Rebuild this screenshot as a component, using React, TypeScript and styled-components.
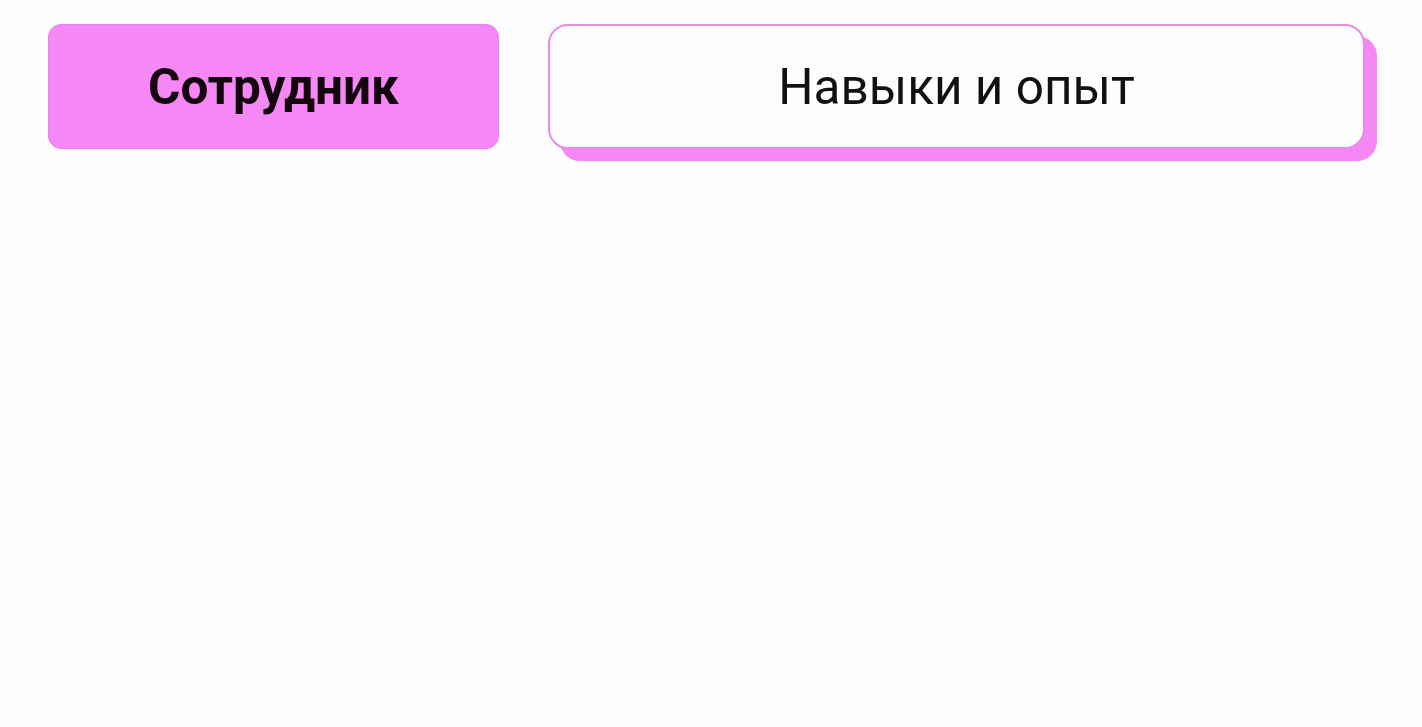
import React from 'react'
import styled, { createGlobalStyle } from 'styled-components'

const GlobalStyle = createGlobalStyle`
  html, body {
    margin: 0;
    padding: 0;
    background: #fdfdfe;
    font-family: Roboto, 'Noto Sans', sans-serif;
  }
`

const Page = styled.div`
  display: flex;
  flex-direction: row;
  align-items: flex-start;
  gap: 49px;
  padding: 24px 57px 0 48px;
  min-height: 727px;
  box-sizing: border-box;
`

const TabButton = styled.button<{ $active?: boolean }>`
  display: flex;
  align-items: center;
  justify-content: center;
  height: 125px;
  box-sizing: border-box;
  font-family: Roboto, 'Noto Sans', sans-serif;
  font-size: 49.5px;
  color: #111;
  cursor: pointer;
  ${(p) =>
    p.$active
      ? `
    width: 451px;
    flex-shrink: 0;
    background: #f588f5;
    border: 1px solid #ec80ec;
    border-radius: 13px;
    font-weight: 700;
    color: #14060f;
  `
      : `
    flex: 1;
    background: #fcfdfe;
    border: 2px solid #e98be8;
    border-radius: 20px;
    font-weight: 400;
    box-shadow: 12px 12px 0 0 #f588f5;
  `}
`

export default function App() {
  return (
    <>
      <GlobalStyle />
      <Page>
        <TabButton $active>Сотрудник</TabButton>
        <TabButton>Навыки и опыт</TabButton>
      </Page>
    </>
  )
}
